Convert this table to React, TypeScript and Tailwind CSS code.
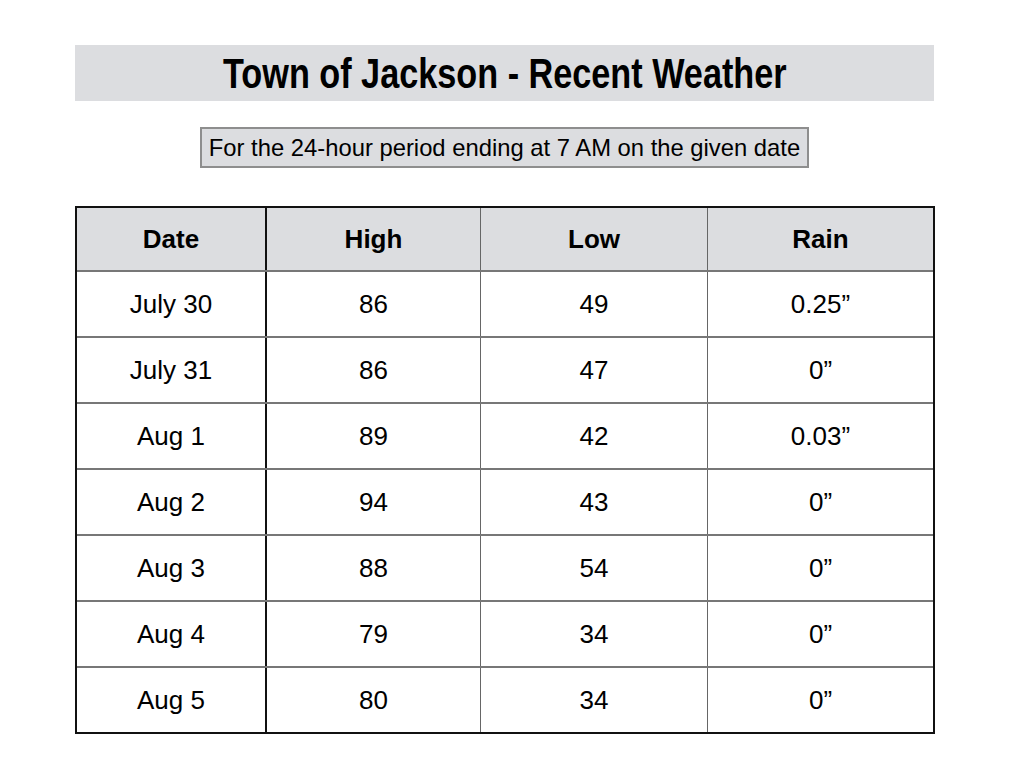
const ROWS = [
  ['July 30', '86', '49', '0.25”'],
  ['July 31', '86', '47', '0”'],
  ['Aug 1', '89', '42', '0.03”'],
  ['Aug 2', '94', '43', '0”'],
  ['Aug 3', '88', '54', '0”'],
  ['Aug 4', '79', '34', '0”'],
  ['Aug 5', '80', '34', '0”'],
];

const HEADERS = ['Date', 'High', 'Low', 'Rain'];

// column widths, left to right
const COLS = ['w-[190px]', 'w-[214px]', 'w-[227px]', 'flex-1'];

function cellBorder(i: number) {
  if (i === 0) return 'border-r-2 border-r-[#111]';
  if (i === 3) return '';
  return 'border-r border-r-[#666]';
}

export default function App() {
  return (
    <div className="w-[1024px] h-[768px] bg-white text-black font-['Liberation_Sans',Arial,sans-serif] pt-[45px]">
      {/* Title bar */}
      <div className="ml-[75px] w-[859px] h-[56px] bg-[#dcdde0] flex items-center justify-center overflow-hidden">
        <span className="inline-block text-[42px] font-bold leading-none scale-x-[0.815] whitespace-nowrap pt-[2px]">
          Town of Jackson - Recent Weather
        </span>
      </div>

      {/* Subtitle */}
      <div className="ml-[200px] mt-[26px] w-[609px] h-[41px] bg-[#dcdde0] border-2 border-[#8e8e8e] flex items-center justify-center text-[23.8px] whitespace-nowrap">
        For the 24-hour period ending at 7 AM on the given date
      </div>

      {/* Table */}
      <div className="ml-[75px] mt-[38px] w-[860px] border-2 border-[#111]">
        <div className="flex h-[64px] bg-[#dcdde0] border-b-2 border-b-[#777]">
          {HEADERS.map((h, i) => (
            <div key={h} className={`${COLS[i]} ${cellBorder(i)} flex items-center justify-center text-[26px] font-bold`}>
              {h}
            </div>
          ))}
        </div>
        {ROWS.map((row, r) => (
          <div
            key={row[0]}
            className={`flex ${r < ROWS.length - 1 ? 'h-[66px] border-b-2 border-b-[#777]' : 'h-[64px]'}`}
          >
            {row.map((v, i) => (
              <div key={i} className={`${COLS[i]} ${cellBorder(i)} flex items-center justify-center text-[26px]`}>
                {v}
              </div>
            ))}
          </div>
        ))}
      </div>
    </div>
  );
}
